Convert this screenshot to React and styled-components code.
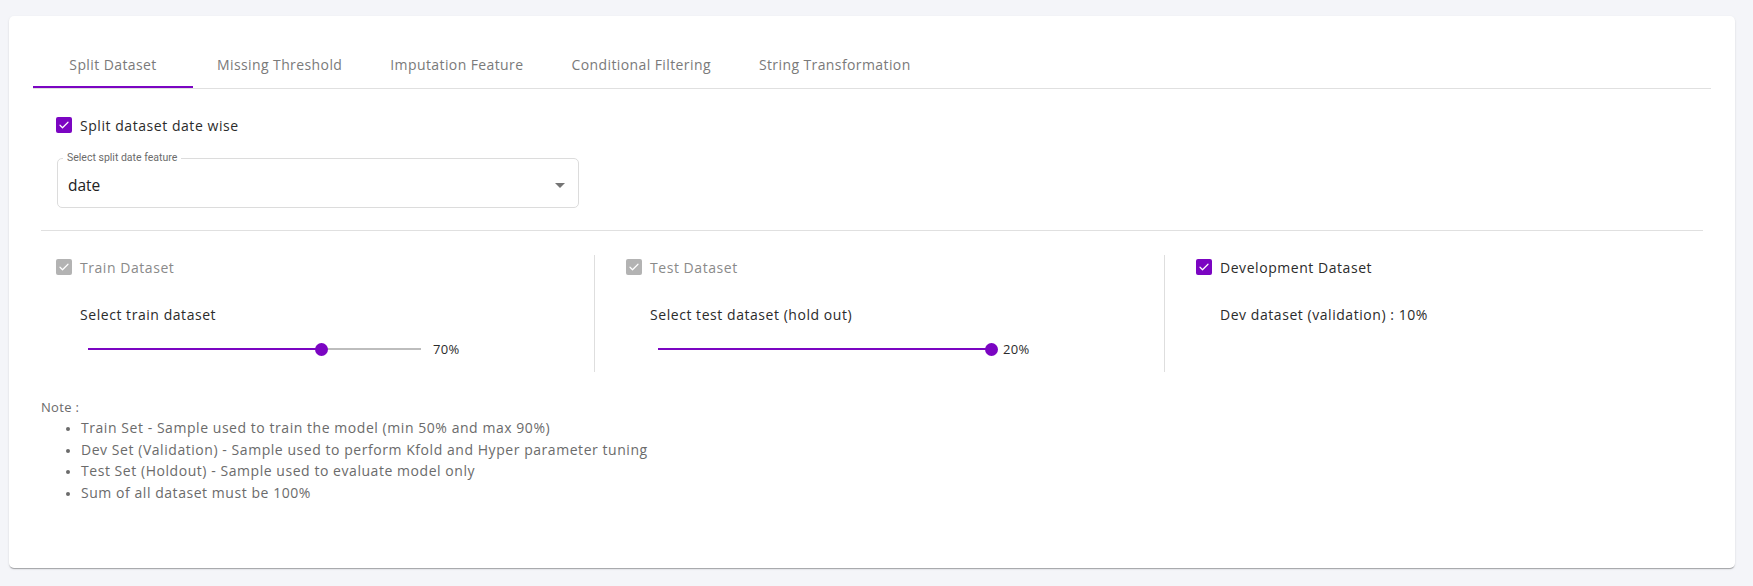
import React from 'react';
import styled, { createGlobalStyle } from 'styled-components';

const PURPLE = '#7b05c2';

const GlobalStyle = createGlobalStyle`
  html, body { margin: 0; padding: 0; background: #f4f5f9; }
  body { font-family: "Open Sans", "Liberation Sans", sans-serif; color: #2b2b2b; }
  * { box-sizing: border-box; }
`;

const Page = styled.div`
  padding: 16px 18px 18px 9px;
`;

const Card = styled.div`
  background: #fff;
  border-radius: 5px;
  height: 552px;
  padding: 24px;
  box-shadow: 0 2px 1px -1px rgba(0,0,0,0.2), 0 1px 1px 0 rgba(0,0,0,0.12), 0 1px 3px 0 rgba(0,0,0,0.08);
`;

const TabBar = styled.div`
  display: flex;
  border-bottom: 1px solid #e0e0e0;
`;

const Tab = styled.div`
  position: relative;
  min-width: 160px;
  height: 48px;
  padding: 0 24px;
  display: flex;
  align-items: center;
  justify-content: center;
  font-size: 14px;
  letter-spacing: 0.4px;
  color: #7a7a7a;
  white-space: nowrap;
  &::after {
    content: '';
    position: absolute;
    left: 0; right: 0; bottom: 0;
    height: 2px;
    background: ${p => (p.$active ? PURPLE : 'transparent')};
  }
`;

const Panel = styled.div`
  padding: 0 8px;
`;

const CheckRow = styled.label`
  display: flex;
  align-items: center;
  gap: 8px;
  height: 24px;
  padding-left: ${p => p.$indent || 0}px;
  margin-top: ${p => p.$top || 0}px;
  font-size: 14px;
  letter-spacing: 0.55px;
  color: ${p => (p.$disabled ? '#8a8a8a' : '#2b2b2b')};
`;

const Box = styled.span`
  width: 16px;
  height: 16px;
  border-radius: 2px;
  background: ${p => (p.$disabled ? '#b3b3b3' : PURPLE)};
  display: flex;
  align-items: center;
  justify-content: center;
  flex: none;
`;

const Checkbox = ({ label, disabled, indent, top }) => (
  <CheckRow $disabled={disabled} $indent={indent} $top={top}>
    <Box $disabled={disabled}>
      <svg width="12" height="12" viewBox="0 0 24 24">
        <path d="M4 12.5l5 5L20 6.5" fill="none" stroke="#fff" strokeWidth="2.4" strokeLinecap="round" strokeLinejoin="round" />
      </svg>
    </Box>
    {label}
  </CheckRow>
);

const SelectBox = styled.div`
  position: relative;
  margin: 21px 0 0 16px;
  width: 522px;
  height: 50px;
  border: 1px solid #dcdcdc;
  border-radius: 5px;
  display: flex;
  align-items: center;
  justify-content: space-between;
  padding: 4px 13px 0 10px;
`;

const SelectLabel = styled.span`
  position: absolute;
  left: 5px;
  top: -7px;
  padding: 0 4px;
  background: #fff;
  font-family: Roboto, "Liberation Sans", sans-serif;
  font-size: 10.5px;
  line-height: 12px;
  color: #6b6b6b;
`;

const SelectValue = styled.span`
  font-size: 15.5px;
  color: #222;
`;

const Divider = styled.div`
  height: 1px;
  background: #e0e0e0;
  margin-top: 22px;
`;

const Columns = styled.div`
  display: grid;
  grid-template-columns: repeat(3, 570px);
  margin: 24px 0 0 -17px;
`;

const Column = styled.div`
  height: 117px;
  padding-left: ${p => (p.$border ? 31 : 32)}px;
  border-left: ${p => (p.$border ? '1px solid #dedede' : 'none')};
`;

const SubLabel = styled.div`
  margin-top: 24px;
  padding-left: 24px;
  font-size: 14px;
  letter-spacing: 0.55px;
  line-height: 24px;
  color: #2b2b2b;
`;

const SliderRow = styled.div`
  display: flex;
  align-items: center;
  gap: 12px;
  height: 24px;
  margin-top: 10px;
  padding-left: 32px;
  font-size: 13px;
  letter-spacing: 0.3px;
  color: #2b2b2b;
`;

const Track = styled.div`
  position: relative;
  width: 333px;
  height: 2px;
  background: #bdbdbd;
`;

const Fill = styled.div`
  height: 2px;
  background: ${PURPLE};
`;

const Thumb = styled.div`
  position: absolute;
  top: 50%;
  width: 13px;
  height: 13px;
  margin: -6.5px 0 0 -6.5px;
  border-radius: 50%;
  background: ${PURPLE};
`;

const Slider = ({ pos, value }) => (
  <SliderRow>
    <Track>
      <Fill style={{ width: `${pos}%` }} />
      <Thumb style={{ left: `${pos}%` }} />
    </Track>
    <span>{value}%</span>
  </SliderRow>
);

const Note = styled.div`
  margin-top: 25px;
  font-size: 14px;
  color: #6b6b6b;
  letter-spacing: 0.55px;
`;

const NoteTitle = styled.div`
  line-height: 20px;
  font-size: 13px;
  letter-spacing: 0.3px;
`;

const NoteList = styled.ul`
  margin: 0;
  padding-left: 40px;
  li { line-height: 21.5px; }
  li::marker { font-size: 11px; }
`;

const tabs = ['Split Dataset', 'Missing Threshold', 'Imputation Feature', 'Conditional Filtering', 'String Transformation'];

export default function App() {
  return (
    <>
      <GlobalStyle />
      <Page>
        <Card>
          <TabBar>
            {tabs.map((t, i) => (
              <Tab key={t} $active={i === 0}>{t}</Tab>
            ))}
          </TabBar>
          <Panel>
            <Checkbox label="Split dataset date wise" indent={15} top={24} />
            <SelectBox>
              <SelectLabel>Select split date feature</SelectLabel>
              <SelectValue>date</SelectValue>
              <svg width="10" height="5" viewBox="0 0 10 5"><path d="M0 0h10L5 5z" fill="#757575" /></svg>
            </SelectBox>
            <Divider />
            <Columns>
              <Column>
                <Checkbox label="Train Dataset" disabled />
                <SubLabel>Select train dataset</SubLabel>
                <Slider pos={70} value={70} />
              </Column>
              <Column $border>
                <Checkbox label="Test Dataset" disabled />
                <SubLabel>Select test dataset (hold out)</SubLabel>
                <Slider pos={100} value={20} />
              </Column>
              <Column $border>
                <Checkbox label="Development Dataset" />
                <SubLabel>Dev dataset (validation) : 10%</SubLabel>
              </Column>
            </Columns>
            <Note>
              <NoteTitle>Note :</NoteTitle>
              <NoteList>
                <li>Train Set - Sample used to train the model (min 50% and max 90%)</li>
                <li>Dev Set (Validation) - Sample used to perform Kfold and Hyper parameter tuning</li>
                <li>Test Set (Holdout) - Sample used to evaluate model only</li>
                <li>Sum of all dataset must be 100%</li>
              </NoteList>
            </Note>
          </Panel>
        </Card>
      </Page>
    </>
  );
}
